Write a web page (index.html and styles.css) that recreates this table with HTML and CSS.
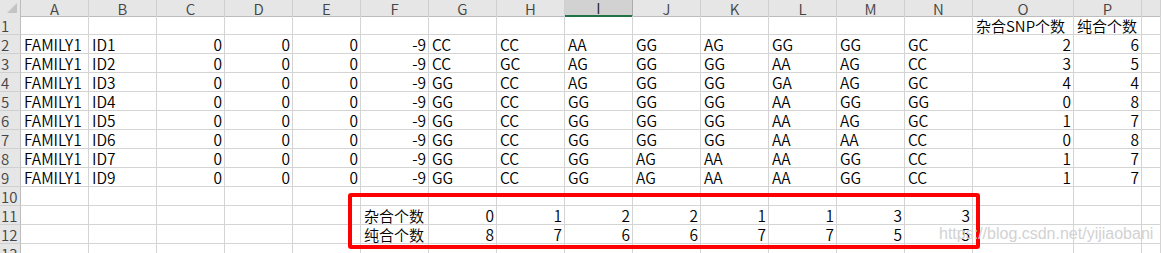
FILE: index.html
```html
<!DOCTYPE html>
<html lang="zh-CN">
<head>
<meta charset="utf-8">
<title>Sheet</title>
<link rel="stylesheet" href="styles.css">
</head>
<body>
<div class="sheet">
  <div class="row head">
    <div class="corner"><svg width="20" height="15" viewBox="0 0 20 15"><polygon points="7,13 17,3 17,13" fill="#c4c4c4"/></svg></div>
    <div class="ch">A</div><div class="ch">B</div><div class="ch">C</div><div class="ch">D</div><div class="ch">E</div><div class="ch">F</div><div class="ch">G</div><div class="ch">H</div><div class="ch sel">I</div><div class="ch">J</div><div class="ch">K</div><div class="ch">L</div><div class="ch">M</div><div class="ch">N</div><div class="ch">O</div><div class="ch">P</div><div class="ch"></div>
  </div>
  <div class="row">
    <div class="rh">1</div><div class="c"></div><div class="c"></div><div class="c"></div><div class="c"></div><div class="c"></div><div class="c"></div><div class="c"></div><div class="c"></div><div class="c"></div><div class="c"></div><div class="c"></div><div class="c"></div><div class="c"></div><div class="c"></div><div class="c cjk">杂合SNP个数</div><div class="c cjk">纯合个数</div><div class="c"></div>
  </div>
  <div class="row">
    <div class="rh">2</div><div class="c">FAMILY1</div><div class="c">ID1</div><div class="c n">0</div><div class="c n">0</div><div class="c n">0</div><div class="c n">-9</div><div class="c">CC</div><div class="c">CC</div><div class="c">AA</div><div class="c">GG</div><div class="c">AG</div><div class="c">GG</div><div class="c">GG</div><div class="c">GC</div><div class="c n">2</div><div class="c n">6</div><div class="c"></div>
  </div>
  <div class="row">
    <div class="rh">3</div><div class="c">FAMILY1</div><div class="c">ID2</div><div class="c n">0</div><div class="c n">0</div><div class="c n">0</div><div class="c n">-9</div><div class="c">CC</div><div class="c">GC</div><div class="c">AG</div><div class="c">GG</div><div class="c">GG</div><div class="c">AA</div><div class="c">AG</div><div class="c">CC</div><div class="c n">3</div><div class="c n">5</div><div class="c"></div>
  </div>
  <div class="row">
    <div class="rh">4</div><div class="c">FAMILY1</div><div class="c">ID3</div><div class="c n">0</div><div class="c n">0</div><div class="c n">0</div><div class="c n">-9</div><div class="c">GG</div><div class="c">CC</div><div class="c">AG</div><div class="c">GG</div><div class="c">GG</div><div class="c">GA</div><div class="c">AG</div><div class="c">GC</div><div class="c n">4</div><div class="c n">4</div><div class="c"></div>
  </div>
  <div class="row">
    <div class="rh">5</div><div class="c">FAMILY1</div><div class="c">ID4</div><div class="c n">0</div><div class="c n">0</div><div class="c n">0</div><div class="c n">-9</div><div class="c">GG</div><div class="c">CC</div><div class="c">GG</div><div class="c">GG</div><div class="c">GG</div><div class="c">AA</div><div class="c">GG</div><div class="c">GG</div><div class="c n">0</div><div class="c n">8</div><div class="c"></div>
  </div>
  <div class="row">
    <div class="rh">6</div><div class="c">FAMILY1</div><div class="c">ID5</div><div class="c n">0</div><div class="c n">0</div><div class="c n">0</div><div class="c n">-9</div><div class="c">GG</div><div class="c">CC</div><div class="c">GG</div><div class="c">GG</div><div class="c">GG</div><div class="c">AA</div><div class="c">AG</div><div class="c">GC</div><div class="c n">1</div><div class="c n">7</div><div class="c"></div>
  </div>
  <div class="row">
    <div class="rh">7</div><div class="c">FAMILY1</div><div class="c">ID6</div><div class="c n">0</div><div class="c n">0</div><div class="c n">0</div><div class="c n">-9</div><div class="c">GG</div><div class="c">CC</div><div class="c">GG</div><div class="c">GG</div><div class="c">GG</div><div class="c">AA</div><div class="c">AA</div><div class="c">CC</div><div class="c n">0</div><div class="c n">8</div><div class="c"></div>
  </div>
  <div class="row">
    <div class="rh">8</div><div class="c">FAMILY1</div><div class="c">ID7</div><div class="c n">0</div><div class="c n">0</div><div class="c n">0</div><div class="c n">-9</div><div class="c">GG</div><div class="c">CC</div><div class="c">GG</div><div class="c">AG</div><div class="c">AA</div><div class="c">AA</div><div class="c">GG</div><div class="c">CC</div><div class="c n">1</div><div class="c n">7</div><div class="c"></div>
  </div>
  <div class="row">
    <div class="rh">9</div><div class="c">FAMILY1</div><div class="c">ID9</div><div class="c n">0</div><div class="c n">0</div><div class="c n">0</div><div class="c n">-9</div><div class="c">GG</div><div class="c">CC</div><div class="c">GG</div><div class="c">AG</div><div class="c">AA</div><div class="c">AA</div><div class="c">GG</div><div class="c">CC</div><div class="c n">1</div><div class="c n">7</div><div class="c"></div>
  </div>
  <div class="row">
    <div class="rh">10</div><div class="c"></div><div class="c"></div><div class="c"></div><div class="c"></div><div class="c"></div><div class="c"></div><div class="c"></div><div class="c"></div><div class="c"></div><div class="c"></div><div class="c"></div><div class="c"></div><div class="c"></div><div class="c"></div><div class="c"></div><div class="c"></div><div class="c"></div>
  </div>
  <div class="row">
    <div class="rh">11</div><div class="c"></div><div class="c"></div><div class="c"></div><div class="c"></div><div class="c"></div><div class="c cjk">杂合个数</div><div class="c n">0</div><div class="c n">1</div><div class="c n">2</div><div class="c n">2</div><div class="c n">1</div><div class="c n">1</div><div class="c n">3</div><div class="c n">3</div><div class="c"></div><div class="c"></div><div class="c"></div>
  </div>
  <div class="row">
    <div class="rh">12</div><div class="c"></div><div class="c"></div><div class="c"></div><div class="c"></div><div class="c"></div><div class="c cjk">纯合个数</div><div class="c n">8</div><div class="c n">7</div><div class="c n">6</div><div class="c n">6</div><div class="c n">7</div><div class="c n">7</div><div class="c n">5</div><div class="c n">5</div><div class="c"></div><div class="c"></div><div class="c"></div>
  </div>
  <div class="row">
    <div class="rh">13</div><div class="c"></div><div class="c"></div><div class="c"></div><div class="c"></div><div class="c"></div><div class="c"></div><div class="c"></div><div class="c"></div><div class="c"></div><div class="c"></div><div class="c"></div><div class="c"></div><div class="c"></div><div class="c"></div><div class="c"></div><div class="c"></div><div class="c"></div>
  </div>
  <div class="mark-box"></div>
  <div class="watermark">https://blog.csdn.net/yijiaobani</div>
</div>
</body>
</html>
```

FILE: styles.css
```css
html, body {
  margin: 0;
  padding: 0;
  background: #ffffff;
  overflow: hidden;
}

.sheet {
  position: relative;
  width: 1161px;
  height: 253px;
  overflow: hidden;
  font-family: "Noto Sans CJK SC", "Noto Sans", sans-serif;
  font-weight: 350;
  font-size: 15.5px;
  color: #000;
}

.row {
  display: grid;
  grid-template-columns: 21px repeat(14, 68px) 101px 68px 1fr;
  height: 19px;
}

.row.head {
  height: 16px;
}

.c, .rh, .ch, .corner {
  box-sizing: border-box;
  display: flex;
  align-items: flex-end;
  white-space: nowrap;
}

.c {
  border-right: 1px solid #d4d4d4;
  border-bottom: 1px solid #d4d4d4;
  padding: 0 2px 0 3px;
  line-height: 17.5px;
}

.c.n {
  justify-content: flex-end;
}

.c.cjk {
  font-size: 15px;
  line-height: 17px;
}

.rh {
  background: #e6e6e6;
  color: #444;
  border-right: 1px solid #bdbdbd;
  border-bottom: 1px solid #d0d0d0;
  padding-left: 1px;
  line-height: 17px;
  font-size: 15px;
}

.corner {
  background: #e6e6e6;
  border-right: 1px solid #bdbdbd;
  border-bottom: 1px solid #bdbdbd;
  align-items: stretch;
}

.corner svg {
  display: block;
}

.ch {
  background: #e6e6e6;
  color: #444;
  border-right: 1px solid #cfcfcf;
  border-bottom: 1px solid #bdbdbd;
  justify-content: center;
  line-height: 15px;
  font-size: 15px;
}

.ch.sel {
  background: #d2d2d2;
  border-right-color: #ababab;
  border-bottom: 2px solid #217346;
  color: #222;
}

.mark-box {
  position: absolute;
  left: 348px;
  top: 193px;
  width: 632px;
  height: 56px;
  box-sizing: border-box;
  border: 4px solid #ff0000;
  border-radius: 3px;
}

.watermark {
  position: absolute;
  left: 939px;
  top: 226px;
  font-family: "Liberation Sans", Arial, sans-serif;
  font-weight: 400;
  font-size: 16px;
  line-height: 16px;
  color: #d2d2d2;
  white-space: nowrap;
}
```
